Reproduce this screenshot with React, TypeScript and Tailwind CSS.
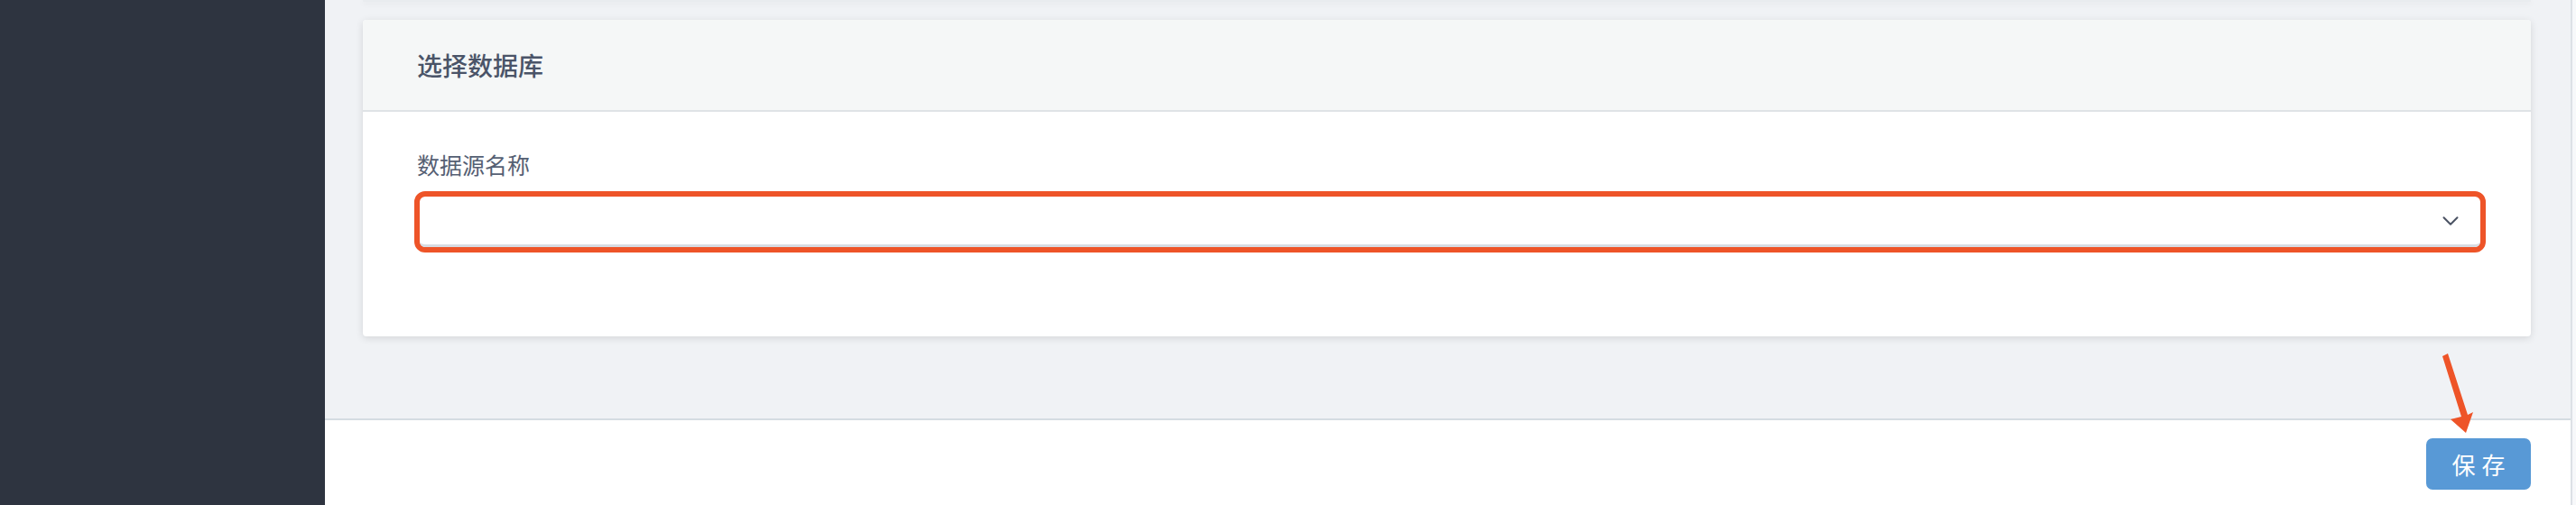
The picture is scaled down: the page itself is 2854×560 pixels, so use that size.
import { ChevronDown } from "lucide-react";

const font = { fontFamily: '"Noto Sans CJK SC", "Noto Sans", sans-serif' };

function SaveArrow() {
  return (
    <svg
      className="absolute left-[-30px] top-[-95px] pointer-events-none"
      width="90"
      height="95"
      viewBox="0 0 90 95"
    >
      <path d="M48 4 L54 1 L76 69 L82 66 L74 89 L57 74 L69 71 Z" fill="#ee5428" />
    </svg>
  );
}

export default function App() {
  return (
    <div className="flex h-[560px] w-[2854px] overflow-hidden" style={font}>
      <aside className="w-[360px] shrink-0 bg-[#2e3440]" />

      <main className="flex flex-1 flex-col">
        <div className="flex h-[464px] flex-col bg-[#f0f2f5] pl-[42px] pr-[44px]">
          <div className="h-[2px] shrink-0 bg-[#e9ecef] shadow-[0_2px_6px_rgba(0,0,0,0.08)]" />

          <section className="mt-[20px] rounded-[4px] bg-white shadow-[0_2px_8px_rgba(0,0,0,0.12)]">
            <header className="flex h-[102px] items-center rounded-t-[4px] border-b-2 border-[#dfe3e6] bg-[#f5f7f7] pl-[60px]">
              <h2 className="text-[28px] font-medium leading-none text-[#4a5468]">选择数据库</h2>
            </header>

            <div className="pb-[93px] pl-[57px] pr-[50px] pt-[40px]">
              <label className="block pl-[3px] text-[25px] leading-[36px] text-[#556073]">
                数据源名称
              </label>
              <div className="mt-[12px] h-[68px] rounded-[12px] border-[6px] border-[#ee5428]">
                <div className="flex h-full items-center justify-end rounded-[6px] border-b-[3px] border-[#d7dce2] pr-[18px]">
                  <ChevronDown size={30} strokeWidth={1.6} className="text-[#4a5263]" />
                </div>
              </div>
            </div>
          </section>
        </div>

        <footer className="flex flex-1 justify-end border-t-2 border-[#d5dce2] bg-white pr-[44px] pt-[20px]">
          <div className="relative">
            <SaveArrow />
            <button className="h-[57px] w-[116px] rounded-[7px] bg-[#5899d6] pl-[7px] text-[26px] tracking-[7px] text-white">
              保存
            </button>
          </div>
        </footer>
      </main>

      <div className="w-[6px] shrink-0 border-l-2 border-[#dde1e6] bg-[#f7f8fa]" />
    </div>
  );
}
